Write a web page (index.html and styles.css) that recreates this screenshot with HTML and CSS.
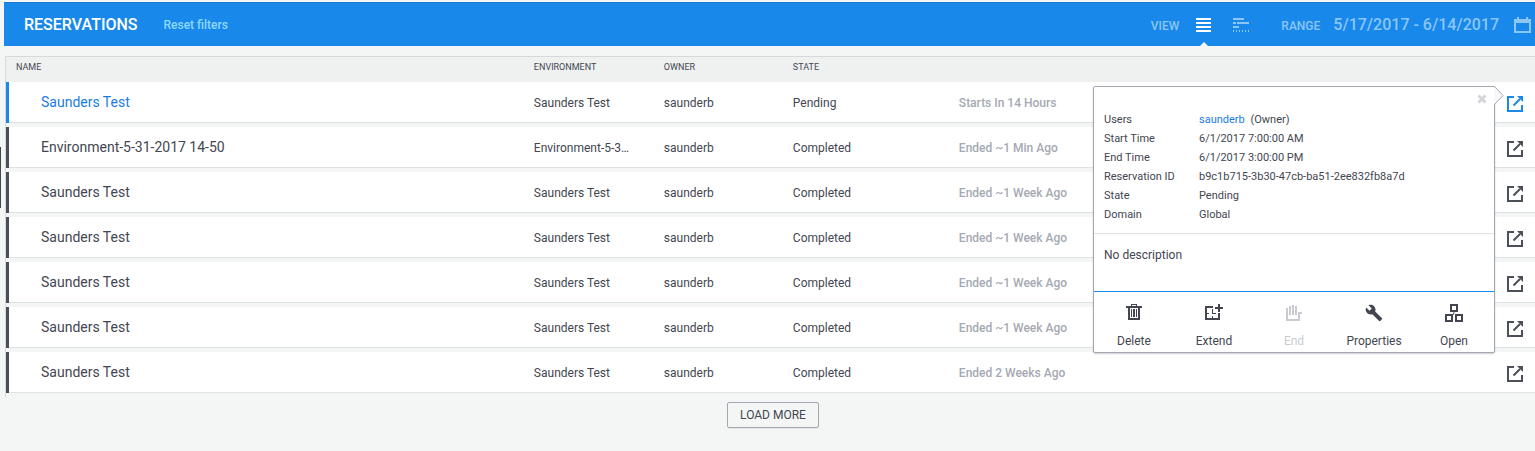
FILE: index.html
```html
<!DOCTYPE html>
<html lang="en">
<head>
<meta charset="utf-8">
<title>Reservations</title>
<link rel="stylesheet" href="styles.css">
</head>
<body>
<svg class="sprite" aria-hidden="true">
  <symbol id="launch" viewBox="0 0 16 16"><path d="M7 1H1v14h14V9" fill="none" stroke="currentColor" stroke-width="2"/><path d="M6.500 9.500 13 3" fill="none" stroke="currentColor" stroke-width="2"/><path d="M10 0h6v6z" fill="currentColor"/></symbol>
</svg>
<button class="drawer-handle" type="button" aria-label="Open side panel"></button>
<header class="topbar">
  <h1 class="title">RESERVATIONS</h1>
  <a class="reset" href="#">Reset filters</a>
  <div class="view">
    <span class="label">VIEW</span>
    <button class="icon-button view-list" type="button" aria-label="List view">
      <svg width="15" height="14" viewBox="0 0 15 14" fill="currentColor"><path d="M0 0h15v2H0zM0 4h15v2H0zM0 8h15v2H0zM0 12h15v2H0z"/></svg>
    </button>
    <button class="icon-button view-timeline" type="button" aria-label="Timeline view">
      <svg width="16" height="14" viewBox="0 0 16 14" fill="currentColor"><path d="M0 0h11v2H0zM0 4h3v2H0zM4 4h12v2H4zM0 8h6v2H0zM0 12h1v2H0zM3 12h1v2H3zM6 12h1v2H6zM9 12h1v2H9zM12 12h1v2h-1zM15 12h1v2h-1z"/></svg>
    </button>
  </div>
  <div class="range">
    <span class="label">RANGE</span>
    <span class="dates">5/17/2017 - 6/14/2017</span>
    <button class="icon-button" type="button" aria-label="Choose dates">
      <svg width="17" height="16" viewBox="0 0 17 16"><path d="M1 3h15v12H1z" fill="none" stroke="currentColor" stroke-width="2"/><path d="M0 2h17v4H0zM3 0h2v3H3zM12 0h2v3h-2z" fill="currentColor"/></svg>
    </button>
  </div>
</header>
<main class="content">
  <table class="list">
    <thead>
      <tr><th class="col-name">NAME</th><th class="col-env">ENVIRONMENT</th><th class="col-owner">OWNER</th><th class="col-state">STATE</th><th class="col-time"></th><th class="col-action"></th></tr>
    </thead>
    <tbody>
      <tr class="selected">
        <td class="name">Saunders Test</td><td>Saunders Test</td><td>saunderb</td><td>Pending</td><td class="time">Starts In 14 Hours</td>
        <td class="action">
          <button class="icon-button launch" type="button" aria-label="Details"><svg width="16" height="16"><use href="#launch"/></svg></button>
          <section class="popover">
            <svg class="pointer" width="10" height="20" viewBox="0 0 10 20"><path d="M0 0 9 9.500 0 19" fill="#f7f8f9" stroke="#a4a6b1"/></svg>
            <button class="close" type="button" aria-label="Close"><svg width="10" height="10" viewBox="0 0 10 10"><path d="M1.500 1.500l7 7M8.500 1.500l-7 7" stroke="currentColor" stroke-width="3"/></svg></button>
            <dl class="details">
              <dt>Users</dt><dd><a href="#">saunderb</a> <span class="role">(Owner)</span></dd>
              <dt>Start Time</dt><dd>6/1/2017 7:00:00 AM</dd>
              <dt>End Time</dt><dd>6/1/2017 3:00:00 PM</dd>
              <dt>Reservation ID</dt><dd>b9c1b715-3b30-47cb-ba51-2ee832fb8a7d</dd>
              <dt>State</dt><dd>Pending</dd>
              <dt>Domain</dt><dd>Global</dd>
            </dl>
            <p class="description">No description</p>
            <div class="actions">
              <button type="button"><svg width="18" height="18" viewBox="0 0 18 18" fill="currentColor"><path d="M1 2h16v2H1zM6 0h6v2h-1V1H7v1H6z"/><path d="M3 4h2v10h8V4h2v12H3zM6 5h1v8H6zM8 5h2v8H8zM11 5h1v8h-1z"/></svg>Delete</button>
              <button type="button"><svg width="18" height="18" viewBox="0 0 18 18" fill="currentColor"><path d="M0 2h8v2H2v10h11V9h2v7H0zM13 0h2v3h3v2h-3v3h-2V5h-3V3h3zM7 5h1v5H7zM8 9h3v1H8zM2 9h2v1H2zM7 12h1v2H7z"/></svg>Extend</button>
              <button type="button" disabled><svg width="18" height="18" viewBox="0 0 18 18" fill="currentColor"><path d="M1 4h2v11h10V8h4v2h-2v7H1zM4 2h2v9H4zM7 1h2v10H7zM10 2h2v9h-2z"/></svg>End</button>
              <button type="button"><svg width="18" height="18" viewBox="0 0 24 24" fill="currentColor"><path d="M22.700 19l-9.100-9.100c.9-2.300.4-5-1.500-6.900-2-2-5-2.400-7.400-1.300L9 6 6 9 1.600 4.700C.4 7.100.9 10.100 2.900 12.100c1.900 1.900 4.600 2.400 6.900 1.500l9.100 9.100c.4.4 1 .4 1.400 0l2.300-2.300c.5-.4.5-1.100.1-1.400z"/></svg>Properties</button>
              <button type="button"><svg width="18" height="18" viewBox="0 0 18 18" fill="none" stroke="currentColor"><path d="M6 1h6v6H6zM1 11h6v6H1zM11 11h6v6h-6z" stroke-width="2"/><path d="M9 7v2L8 11"/></svg>Open</button>
            </div>
          </section>
        </td>
      </tr>
      <tr><td class="name">Environment-5-31-2017 14-50</td><td>Environment-5-31-2017 14-50</td><td>saunderb</td><td>Completed</td><td class="time">Ended ~1 Min Ago</td><td class="action"><button class="icon-button launch" type="button" aria-label="Details"><svg width="16" height="16"><use href="#launch"/></svg></button></td></tr>
      <tr><td class="name">Saunders Test</td><td>Saunders Test</td><td>saunderb</td><td>Completed</td><td class="time">Ended ~1 Week Ago</td><td class="action"><button class="icon-button launch" type="button" aria-label="Details"><svg width="16" height="16"><use href="#launch"/></svg></button></td></tr>
      <tr><td class="name">Saunders Test</td><td>Saunders Test</td><td>saunderb</td><td>Completed</td><td class="time">Ended ~1 Week Ago</td><td class="action"><button class="icon-button launch" type="button" aria-label="Details"><svg width="16" height="16"><use href="#launch"/></svg></button></td></tr>
      <tr><td class="name">Saunders Test</td><td>Saunders Test</td><td>saunderb</td><td>Completed</td><td class="time">Ended ~1 Week Ago</td><td class="action"><button class="icon-button launch" type="button" aria-label="Details"><svg width="16" height="16"><use href="#launch"/></svg></button></td></tr>
      <tr><td class="name">Saunders Test</td><td>Saunders Test</td><td>saunderb</td><td>Completed</td><td class="time">Ended ~1 Week Ago</td><td class="action"><button class="icon-button launch" type="button" aria-label="Details"><svg width="16" height="16"><use href="#launch"/></svg></button></td></tr>
      <tr><td class="name">Saunders Test</td><td>Saunders Test</td><td>saunderb</td><td>Completed</td><td class="time">Ended 2 Weeks Ago</td><td class="action"><button class="icon-button launch" type="button" aria-label="Details"><svg width="16" height="16"><use href="#launch"/></svg></button></td></tr>
    </tbody>
  </table>
  <div class="more"><button class="load" type="button">LOAD MORE</button></div>
</main>
</body>
</html>
```
FILE: styles.css
```css
* { box-sizing: border-box; }

body {
  margin: 0;
  padding: 2px 0 0 4px;
  background: #f4f6f6;
  color: #434651;
  font: 12px/16px Roboto, sans-serif;
}

button {
  padding: 0;
  border: 0;
  background: none;
  color: inherit;
  font: inherit;
  cursor: pointer;
}

svg { display: block; }
a { color: #1a7be4; text-decoration: none; }
.sprite { position: absolute; width: 0; height: 0; }

.drawer-handle {
  position: absolute;
  top: 147px;
  left: 0;
  width: 1px;
  height: 61px;
  background: #434651;
}

.topbar {
  display: flex;
  align-items: center;
  height: 44px;
  padding: 0 4px 0 20px;
  border-top: 1px solid #1a7ad2;
  background: #1888eb;
  color: #8cc6f7;
}

.title {
  margin: 0;
  color: #fff;
  font-size: 16px;
  font-weight: 500;
}

.reset {
  margin-left: 26px;
  color: #8fd8ff;
  font-weight: 500;
}

.view,
.range {
  display: flex;
  align-items: center;
  align-self: stretch;
}

.view { margin-left: auto; }
.label { padding-top: 2px; font-weight: 500; }

.view-list {
  position: relative;
  align-self: stretch;
  margin-left: 17px;
  color: #fff;
}

.view-list::after {
  content: "";
  position: absolute;
  bottom: 0;
  left: 4px;
  border: 4px solid transparent;
  border-top: 0;
  border-bottom-color: #f4f6f6;
}

.view-timeline { margin-left: 22px; }
.range { margin-left: 32px; }

.dates {
  margin: 0 15px 0 13px;
  font-size: 16px;
  font-weight: 500;
}

.content { padding: 10px 0 20px 1px; }

.list {
  width: 100%;
  border: solid #d5d9d9;
  border-width: 1px 0 0 1px;
  border-spacing: 0;
  table-layout: fixed;
}

.list th {
  height: 25px;
  padding: 0 8px 6px;
  background: #eff1f1;
  font-size: 9px;
  font-weight: 400;
  line-height: 12px;
  text-align: left;
}

.list .col-name { width: 34%; padding-left: 10px; }
.col-env { width: 130px; }
.col-owner { width: 129px; }
.col-state { width: 166px; }
.col-action { width: 36px; }

.list td {
  height: 45px;
  padding: 0 24px 0 8px;
  overflow: hidden;
  border-bottom: 4px solid #f4f6f6;
  background: #fff;
  box-shadow: inset 0 -1px #dce2e5;
  text-overflow: ellipsis;
  white-space: nowrap;
}

.list .name {
  padding: 0 8px 2px 35px;
  box-shadow: inset 3px 0 #4b4f5a, inset 0 -1px #dce2e5;
  font-size: 14px;
}

.list .selected .name {
  box-shadow: inset 3px 0 #1888eb, inset 0 -1px #dce2e5;
  color: #1a7be4;
}

.list .time { color: #a5a9b3; font-weight: 500; }

.list .action {
  position: relative;
  padding: 6px 0 0 8px;
  overflow: visible;
}

.launch { color: #4b4f5a; }
.selected .launch { color: #1888eb; }

.popover {
  position: absolute;
  z-index: 1;
  top: 4px;
  right: 40px;
  width: 402px;
  border: 1px solid #a4a6b1;
  border-radius: 2px;
  background: #fff;
  box-shadow: 0 1px 2px #0003;
}

.pointer { position: absolute; top: -1px; right: -10px; }

.close {
  position: absolute;
  top: 7px;
  right: 7px;
  color: #d3d5d8;
}

.details {
  display: grid;
  grid-template-columns: 95px 1fr;
  margin: 0;
  padding: 23px 10px 9px;
  border-bottom: 1px solid #dce2e5;
  font-size: 11px;
  line-height: 19px;
}

.details dd { margin: 0; }
.role { margin-left: 3px; }

.description {
  min-height: 57px;
  margin: 0;
  padding: 13px 10px;
}

.actions {
  display: grid;
  grid-template-columns: repeat(5, 1fr);
  border-top: 1px solid #1888eb;
}

.actions button {
  display: flex;
  flex-direction: column;
  align-items: center;
  gap: 11px;
  padding: 12px 0 3px;
}

.actions button:disabled { color: #c9cbd0; }

.more { display: flex; justify-content: center; padding: 5px 0 0 6px; }

.load {
  padding: 4px 12px;
  border: 1px solid #a4a6b1;
  border-radius: 2px;
  box-shadow: 0 1px 1px #0001;
}
```
